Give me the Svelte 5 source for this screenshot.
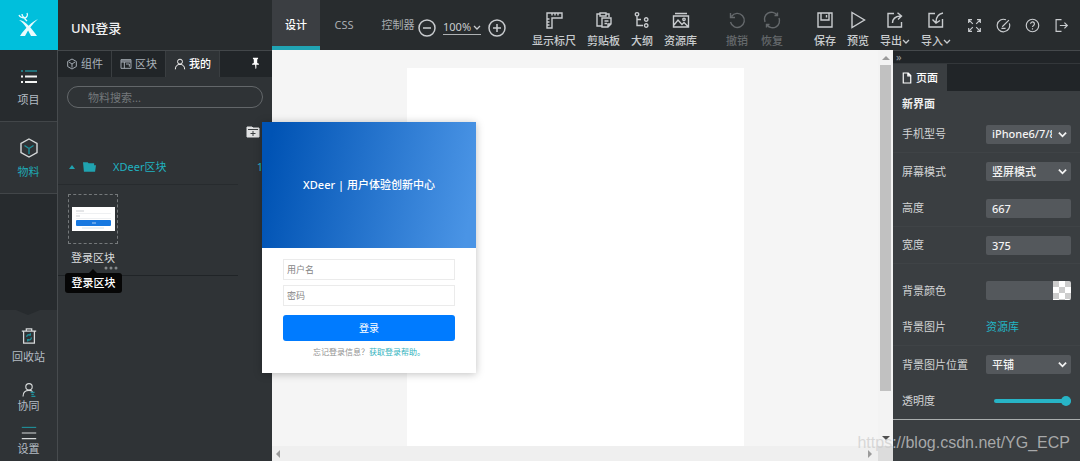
<script>
  let device = $state('iPhone6/7/8');
  let orientation = $state('竖屏模式');
  let height = $state('667');
  let width = $state('375');
  let color = $state('');
  let repeat = $state('平铺');
  let opacity = $state(100);
  let keyword = $state('');
  let username = $state('');
  let password = $state('');

  const modes = ['设计', 'CSS', '控制器'];
  let mode = $state('设计');

  const viewTools = [
    { id: 'ruler', label: '显示标尺' },
    { id: 'clipboard', label: '剪贴板' },
    { id: 'outline', label: '大纲' },
    { id: 'library', label: '资源库' }
  ];
  const historyTools = [
    { id: 'undo', label: '撤销' },
    { id: 'redo', label: '恢复' }
  ];
  const fileTools = [
    { id: 'save', label: '保存' },
    { id: 'play', label: '预览' },
    { id: 'export', label: '导出', menu: true },
    { id: 'import', label: '导入', menu: true }
  ];
  const windowTools = [
    { id: 'fullscreen', label: '全屏' },
    { id: 'compass', label: '导航' },
    { id: 'help', label: '帮助' },
    { id: 'exit', label: '退出' }
  ];
  const panelTabs = [
    { id: 'cube', label: '组件' },
    { id: 'block', label: '区块' },
    { id: 'user', label: '我的' }
  ];
  let panelTab = $state('我的');

  // 18x18 line icons
  const icons = {
    ruler: 'M2 2h15v5H7v10H2zM7 2v2.500M10 2v2.500M13 2v2.500M2 8h2.500M2 11h2.500M2 14h2.500',
    clipboard: 'M5 3H2v12h5M11 3h3v3M5 2h6v3H5zM7 7h9v6l-3 3H7zM9.500 10h4M9.500 12.500h2.500M16 13h-3v3',
    outline: 'M4 5v9.500h6M2.300 3.300a1.700 1.700 0 1 0 3.400 0a1.700 1.700 0 1 0-3.400 0M11.500 8.500a1.700 1.700 0 1 0 3.400 0a1.700 1.700 0 1 0-3.400 0M11.500 14.500a1.700 1.700 0 1 0 3.400 0a1.700 1.700 0 1 0-3.400 0M4 8.500h4',
    library: 'M3 2.500h12M1.500 5h15v11h-15zM2 14l4-5l4 4.500l2-2l4 4M10.800 8.300a1.200 1.200 0 1 0 2.400 0a1.200 1.200 0 1 0-2.400 0',
    undo: 'M3.500 5.500A7 7 0 1 1 2.500 11M2.500 2v4.500H7',
    redo: 'M2 11A7 7 0 0 1 14 4M16 7A7 7 0 0 1 4 14M14.500 1.500v3H11.500M3.500 16.500v-3H6.500',
    save: 'M2 2h14v14H2zM5 2v7h8V2M10.500 4v2.500',
    play: 'M3 1.500L15.500 9L3 16.500z',
    export: 'M8 2.500H2v13.500h13.500v-5M6.500 12c0-4 2-6.500 8-7M11.500 1.800L15.500 5l-3.500 3.500',
    import: 'M8 2.500H2v13.500h13.500V8M16 2c-5 1-7 4-7 9M5.500 8.500L9 12l4-2.500',
    fullscreen: 'M2 6V2h4M12 2h4v4M16 12v4h-4M6 16H2v-4M2.500 2.500L7 7M15.500 2.500L11 7M15.500 15.500L11 11M2.500 15.500L7 11',
    compass: 'M12 2.200A7.500 7.500 0 1 0 16 6.500M15.500 2.500L7.500 10.500M6.500 12.500h5',
    help: 'M1.500 9a7.500 7.500 0 1 0 15 0a7.500 7.500 0 1 0-15 0M6.700 7a2.300 2.300 0 1 1 3.600 1.900Q9 9.700 9 10.800M9 12.300v1.500',
    exit: 'M9 2H2.500v14H9M7 9h9M12.500 5.500L16 9l-3.500 3.500',
    cube: 'M9 1.500l6.500 3.700v7.600L9 16.500l-6.500-3.700V5.200zM4.500 6L9 9l4.500-3M9 9v5.500',
    block: 'M1.500 2.500h15v13h-15zM1.500 6h15M6.500 6v9.500M2 4.300h14M9 9h5v4',
    user: 'M5.300 5.500a3.700 3.700 0 1 0 7.400 0a3.700 3.700 0 1 0-7.400 0M2 17c0-5 3-7.500 7-7.500s7 2.500 7 7.500'
  };
</script>

{#snippet icon(id)}
  <svg class="icon" viewBox="0 0 18 18" aria-hidden="true"><path d={icons[id]} /></svg>
{/snippet}

{#snippet toolGroup(items, name)}
  <div class="tools {name}">
    {#each items as item}
      <button class="tool" disabled={name === 'history'}>
        {@render icon(item.id)}
        <span class="tool-label">
          {item.label}{#if item.menu}<svg class="caret" viewBox="0 0 8 8"><path d="M1 3l3 3l3-3" /></svg>{/if}
        </span>
      </button>
    {/each}
  </div>
{/snippet}

<div class="editor">
  <header class="topbar">
    <a class="logo" href="#home" aria-label="XDeer">
      <svg viewBox="0 0 24 26">
        <path d="M2 8C8 8 15 17 20 24L14 24C11 18 8 12 2 8z" />
        <path d="M21 7C15 10 8 16 3 24L8 24C11 18 15 12 21 7z" />
        <path class="antler" d="M2 3c1 3 4 3 7 3M5 2c0 2 1 3 3 4M10 1c1 2 0 4-2 5M7 6l3 3" />
      </svg>
    </a>
    <h1>UNI登录</h1>
    <nav class="modes">
      {#each modes as m}
        <button class="mode" class:active={mode === m} onclick={() => (mode = m)}>{m}</button>
      {/each}
    </nav>
    <div class="zoom">
      <button class="round" aria-label="缩小"><svg viewBox="0 0 18 18"><circle cx="9" cy="9" r="8" /><path d="M5 9h8" /></svg></button>
      <button class="percent">100%<svg class="caret" viewBox="0 0 8 8"><path d="M1 3l3 3l3-3" /></svg></button>
      <button class="round" aria-label="放大"><svg viewBox="0 0 18 18"><circle cx="9" cy="9" r="8" /><path d="M5 9h8M9 5v8" /></svg></button>
    </div>
    {@render toolGroup(viewTools, 'view')}
    {@render toolGroup(historyTools, 'history')}
    {@render toolGroup(fileTools, 'file')}
    <div class="window-tools">
      {#each windowTools as item}
        <button aria-label={item.label}>{@render icon(item.id)}</button>
      {/each}
    </div>
  </header>

  <div class="body">
    <nav class="rail">
      <a class="rail-item" href="#project">
        <svg viewBox="0 0 20 20">
          <path class="teal" d="M6 5h12" /><path class="thick" d="M6 10.500h12M6 16h12M2 10.500h2M2 16h2" /><path class="teal" d="M2 5h2" />
        </svg>
        <span>项目</span>
      </a>
      <a class="rail-item current" href="#material">
        <svg viewBox="0 0 20 20">
          <path d="M10 1l8 4.500v9L10 19l-8-4.500v-9z" /><path class="teal" d="M5.500 7.500L10 10.500l4.500-3M10 10.500V16" />
        </svg>
        <span>物料</span>
      </a>
      <div class="rail-bottom">
        <a class="rail-small bin" href="#trash">
          <svg viewBox="0 0 20 20">
            <path d="M2 4.500h16M7 4V2h6v2M4 5v13h12V5" /><path class="teal" d="M7.500 11a2.500 2.500 0 0 1 4-2M12.500 11.500a2.500 2.500 0 0 1-4 2.500M11.500 7v2h-2M8.500 16v-2h2" />
          </svg>
          <span>回收站</span>
        </a>
        <a class="rail-small" href="#team">
          <svg viewBox="0 0 20 20">
            <circle cx="10" cy="6" r="4" /><path d="M2.500 18c0-5 3-7.500 7.500-7.500c2 0 3.500.500 4.500 1.500" /><path class="teal" d="M12 13h5M13 15.500h3M13 18h5" />
          </svg>
          <span>协同</span>
        </a>
        <a class="rail-small" href="#settings">
          <svg viewBox="0 0 20 20"><path class="teal" d="M1 3h18" /><path d="M1 10h18M1 17h18" /></svg>
          <span>设置</span>
        </a>
      </div>
    </nav>

    <aside class="materials">
      <div class="panel-tabs">
        {#each panelTabs as tab}
          <button class="panel-tab" class:active={panelTab === tab.label} onclick={() => (panelTab = tab.label)}>
            {@render icon(tab.id)}{tab.label}
          </button>
        {/each}
        <button class="pin" aria-label="固定">
          <svg viewBox="0 0 10 14"><path d="M2 1h6v1L7 3v4l2 1v1H6v4L5 14L4.500 9H1V8l2-1V3L2 2z" /></svg>
        </button>
      </div>
      <input class="search" type="text" placeholder="物料搜索..." aria-label="物料搜索" bind:value={keyword} />
      <div class="actions">
        <button aria-label="新建分组">
          <svg viewBox="0 0 14 12"><path class="fill" d="M1 1h5l1 1h6v9H1z" /><path class="plus" d="M7 5v5M4.500 7.500h5M2 3.500h10" /></svg>
        </button>
      </div>
      <button class="group">
        <svg class="up" viewBox="0 0 8 8"><path d="M1 6l3-4l3 4z" /></svg>
        <svg class="folder" viewBox="0 0 14 12"><path d="M0 1h5l1 1h6v2h2l-1 7H1z" /></svg>
        <span>XDeer区块</span>
        <span class="count">1</span>
      </button>
      <div class="blocks">
        <figure class="block">
          <div class="thumb">
            <svg viewBox="0 0 43 24">
              <rect width="43" height="24" fill="#fff" />
              <path d="M4 4h8M4 9h4" stroke="#c9ccd0" />
              <path d="M4 6.500h35M4 11.500h35" stroke="#eef0f2" />
              <rect x="4" y="13" width="35" height="6" rx="1" fill="#1778e0" />
              <path d="M20 16h4" stroke="#a9cdf5" />
              <path d="M10 21h22" stroke="#d3e4ee" />
            </svg>
          </div>
          <figcaption>登录区块</figcaption>
          <svg class="more" viewBox="0 0 14 4"><circle cx="2" cy="2" r="1.500" /><circle cx="7" cy="2" r="1.500" /><circle cx="12" cy="2" r="1.500" /></svg>
          <div class="tooltip" role="tooltip">登录区块</div>
        </figure>
      </div>

      <section class="preview">
        <div class="banner">XDeer | 用户体验创新中心</div>
        <form class="login">
          <input type="text" placeholder="用户名" aria-label="用户名" bind:value={username} />
          <input type="password" placeholder="密码" aria-label="密码" bind:value={password} />
          <button type="button">登录</button>
          <p>忘记登录信息？<a href="#help">获取登录帮助。</a></p>
        </form>
      </section>
    </aside>

    <main class="stage">
      <div class="stage-row">
        <div class="canvas"><div class="page"></div></div>
        <div class="vbar">
          <svg viewBox="0 0 8 8"><path d="M0 6l4-4l4 4z" /></svg>
          <div class="handle"></div>
          <svg class="dark" viewBox="0 0 8 8"><path d="M0 2l4 4l4-4z" /></svg>
        </div>
      </div>
      <div class="hbar">
        <svg viewBox="0 0 8 8"><path d="M6 0L2 4l4 4z" /></svg>
        <svg viewBox="0 0 8 8"><path d="M2 0l4 4l-4 4z" /></svg>
        <span class="corner"></span>
      </div>
    </main>

    <aside class="props">
      <button class="collapse" aria-label="收起">»</button>
      <div class="props-tabs">
        <button class="props-tab">
          <svg viewBox="0 0 12 14"><path d="M1.500 1h6l3 3v9h-9zM7 1v3.500h3.500" /></svg>页面
        </button>
      </div>
      <h2>新界面</h2>
      <div class="row line">
        <label for="device">手机型号</label>
        <div class="select">
          <select id="device" bind:value={device}><option>iPhone6/7/8</option><option>iPhone X</option></select>
          <svg viewBox="0 0 10 10"><path d="M1 3l4 4l4-4" /></svg>
        </div>
      </div>
      <div class="row">
        <label for="orientation">屏幕模式</label>
        <div class="select">
          <select id="orientation" bind:value={orientation}><option>竖屏模式</option><option>横屏模式</option></select>
          <svg viewBox="0 0 10 10"><path d="M1 3l4 4l4-4" /></svg>
        </div>
      </div>
      <div class="row line">
        <label for="height">高度</label>
        <input class="field" id="height" type="text" bind:value={height} />
      </div>
      <div class="row line">
        <label for="width">宽度</label>
        <input class="field" id="width" type="text" bind:value={width} />
      </div>
      <div class="row color">
        <label for="color">背景颜色</label>
        <div class="swatch-field">
          <input id="color" type="text" bind:value={color} />
          <button class="swatch" aria-label="选择颜色"></button>
        </div>
      </div>
      <div class="row line">
        <span>背景图片</span>
        <a class="pick" href="#library">资源库</a>
      </div>
      <div class="row">
        <label for="repeat">背景图片位置</label>
        <div class="select">
          <select id="repeat" bind:value={repeat}><option>平铺</option><option>居中</option></select>
          <svg viewBox="0 0 10 10"><path d="M1 3l4 4l4-4" /></svg>
        </div>
      </div>
      <div class="row last">
        <label for="opacity">透明度</label>
        <input class="slider" id="opacity" type="range" min="0" max="100" bind:value={opacity} />
      </div>
    </aside>
  </div>
  <div class="watermark">https://blog.csdn.net/YG_ECP</div>
</div>

<style>
  :global(body) {
    margin: 0;
    background: #2f3336;
  }

  .editor {
    position: relative;
    display: flex;
    flex-direction: column;
    min-height: 100vh;
    overflow: hidden;
    font-family: "Noto Sans", "Noto Sans CJK SC", sans-serif;
    font-size: 11px;
    line-height: 16px;
    color: #c9cccf;
  }

  .editor * {
    box-sizing: border-box;
  }

  button,
  input,
  select {
    margin: 0;
    padding: 0;
    border: 0;
    background: none;
    color: inherit;
    font: inherit;
  }

  a {
    color: inherit;
    text-decoration: none;
  }

  svg {
    display: block;
    flex: none;
    fill: none;
    stroke: currentColor;
  }

  .icon {
    width: 18px;
    height: 18px;
    stroke-width: 1.4;
  }

  .caret {
    width: 8px;
    height: 8px;
    stroke-width: 1.3;
  }

  /* top bar */
  .topbar {
    display: flex;
    align-items: stretch;
    height: 50px;
    background: #282c2e;
  }

  .logo {
    display: flex;
    flex: none;
    align-items: center;
    justify-content: center;
    width: 58px;
    background: #00bfdc;
  }

  .logo svg {
    width: 24px;
    height: 26px;
    fill: #e9fbfd;
    stroke: none;
  }

  .logo .antler {
    fill: none;
    stroke: #e9fbfd;
    stroke-width: 1.3;
  }

  h1 {
    flex: none;
    width: 214px;
    margin: 0;
    padding: 18px 13px 0;
    font-size: 13px;
    font-weight: 500;
    line-height: 20px;
    color: #f0f1f2;
  }

  .modes {
    display: flex;
  }

  .mode {
    width: 48px;
    padding-top: 4px;
    border-bottom: 4px solid transparent;
    color: #aaaeb1;
    white-space: nowrap;
  }

  .mode:last-child {
    width: 60px;
  }

  .mode.active {
    border-color: #21a4b4;
    background: #3b3e42;
    color: #fff;
    font-weight: 500;
  }

  .zoom {
    display: flex;
    align-items: center;
    gap: 7px;
    padding-top: 5px;
    margin-left: -10px;
  }

  .round svg {
    width: 18px;
    height: 18px;
    stroke-width: 1.5;
  }

  .percent {
    display: flex;
    align-items: center;
    gap: 2px;
    border-bottom: 1px solid #aeb1b3;
    line-height: 14px;
  }

  .tools {
    display: flex;
    gap: 11px;
    padding-top: 11px;
    font-weight: 500;
  }

  .view {
    margin-left: 26px;
  }

  .history {
    gap: 13px;
    margin-left: 29px;
    color: #65696c;
  }

  .file {
    margin-left: 31px;
  }

  .tool {
    display: flex;
    flex-direction: column;
    align-items: center;
    gap: 4px;
    height: 38px;
  }

  .tool-label {
    display: flex;
    align-items: center;
    white-space: nowrap;
  }

  .window-tools {
    display: flex;
    gap: 14px;
    align-items: center;
    margin-left: auto;
    padding-right: 11px;
  }

  .window-tools .icon {
    width: 15px;
    height: 15px;
  }

  .body {
    display: flex;
    flex: 1;
  }

  /* left rail */
  .rail {
    display: flex;
    flex: none;
    flex-direction: column;
    width: 58px;
    border-right: 1px solid #474b4e;
    background: #272b2e;
    color: #b4bcc4;
  }

  .rail svg {
    width: 20px;
    height: 20px;
    stroke: #d6d9da;
    stroke-width: 1.4;
  }

  .rail .teal {
    stroke: #20909b;
  }

  .rail .thick {
    stroke: #f2f3f3;
    stroke-width: 2;
  }

  .rail-item {
    display: flex;
    flex-direction: column;
    align-items: center;
    gap: 6px;
    height: 71px;
    padding-top: 16px;
  }

  .rail-item.current {
    height: 73px;
    border-top: 1px solid #424649;
    border-bottom: 1px solid #424649;
    background: #2f3336;
    color: #1fa9b7;
  }

  .rail-bottom {
    position: relative;
    display: flex;
    flex-direction: column;
    gap: 11px;
    margin-top: auto;
    padding: 17px 0 4px;
    background: #2f3336;
  }

  .rail-bottom::before {
    position: absolute;
    top: 0;
    left: 16px;
    border: 12px solid transparent;
    border-top: 5px solid #272b2e;
    border-bottom: 0;
    content: "";
  }

  .rail-small {
    display: flex;
    flex-direction: column;
    align-items: center;
  }

  .rail-small svg {
    width: 16px;
    height: 16px;
  }

  .bin {
    gap: 4px;
    padding-bottom: 6px;
  }

  .bin svg {
    width: 18px;
    height: 18px;
  }

  /* material panel */
  .materials {
    position: relative;
    z-index: 1;
    flex: none;
    width: 214px;
    background: #2f3336;
  }

  .panel-tabs {
    display: flex;
    height: 27px;
    border-top: 1px solid #43474a;
    background: #212528;
  }

  .panel-tab {
    display: flex;
    align-items: center;
    justify-content: center;
    gap: 3px;
    width: 54px;
    border-right: 1px solid #3a3e41;
    color: #aab2ba;
  }

  .panel-tab .icon {
    width: 12px;
    height: 12px;
  }

  .panel-tab.active {
    background: #2f3336;
    color: #fff;
    font-weight: 500;
  }

  .pin {
    margin-left: auto;
    padding: 0 12px 3px;
  }

  .pin svg {
    width: 9px;
    height: 12px;
    fill: #fff;
    stroke: none;
  }

  .search {
    display: block;
    width: 196px;
    height: 22px;
    margin: 9px 9px 0;
    padding: 0 20px;
    border: 1px solid #63676a;
    border-radius: 11px;
  }

  .search::placeholder {
    color: #74787b;
  }

  .actions {
    display: flex;
    justify-content: flex-end;
    padding: 18px 12px 0;
  }

  .actions svg {
    width: 14px;
    height: 12px;
  }

  .actions .fill {
    fill: #e1e2e3;
    stroke: #e1e2e3;
  }

  .actions .plus {
    stroke: #3a3e41;
    stroke-width: 1;
  }

  .group {
    display: flex;
    align-items: center;
    width: 100%;
    height: 46px;
    padding: 11px 9px 0 10px;
    color: #20b2c0;
  }

  .group svg {
    fill: #20a3b0;
    stroke: none;
  }

  .up {
    width: 8px;
    height: 8px;
  }

  .folder {
    width: 13px;
    height: 12px;
    margin: 0 17px 0 7px;
  }

  .count {
    margin-left: auto;
  }

  .blocks {
    margin-right: 34px;
    padding: 9px 10px 5px;
    border-top: 1px solid #272b2e;
    border-bottom: 1px solid #202427;
  }

  .block {
    position: relative;
    width: 50px;
    margin: 0;
    color: #d9dbdc;
    text-align: center;
    white-space: nowrap;
  }

  .thumb {
    display: flex;
    align-items: center;
    justify-content: center;
    height: 50px;
    border: 1px dashed #75797b;
  }

  .thumb svg {
    width: 43px;
    height: 24px;
    stroke: none;
  }

  figcaption {
    padding-top: 6px;
  }

  .more {
    width: 14px;
    height: 4px;
    margin-left: auto;
    fill: #85898b;
    stroke: none;
  }

  .tooltip {
    position: absolute;
    top: 79px;
    left: -3px;
    width: 57px;
    border-radius: 3px;
    background: #060606;
    color: #fff;
    font-weight: 500;
    line-height: 20px;
  }

  .tooltip::before {
    position: absolute;
    top: -4px;
    left: 24px;
    border: 4px solid transparent;
    border-top: 0;
    border-bottom-color: #060606;
    content: "";
  }

  /* floating block preview */
  .preview {
    position: absolute;
    top: 72px;
    left: 204px;
    width: 214px;
    background: #fff;
    box-shadow: 0 1px 8px rgba(0, 0, 0, 0.25);
  }

  .banner {
    background: linear-gradient(100deg, #0053b4 5%, #4a94e5 95%);
    color: #fff;
    font-weight: 500;
    line-height: 126px;
    text-align: center;
  }

  .login {
    display: flex;
    flex-direction: column;
    gap: 5px;
    padding: 11px 21px 15px;
  }

  .login input {
    height: 21px;
    padding: 0 3px;
    border: 1px solid #ebebeb;
    color: #555;
    font-size: 9px;
  }

  .login input::placeholder {
    color: #858585;
  }

  .login button {
    height: 26px;
    margin-top: 4px;
    border-radius: 3px;
    background: #007bff;
    color: #fff;
    font-size: 10px;
  }

  .login p {
    margin: 0;
    color: #909090;
    font-size: 8px;
    line-height: 12px;
    text-align: center;
    white-space: nowrap;
  }

  .login a {
    color: #35b4c0;
  }

  /* canvas */
  .stage {
    display: flex;
    flex: 1;
    flex-direction: column;
    min-width: 0;
    background: #f5f5f5;
  }

  .stage-row {
    display: flex;
    flex: 1;
  }

  .canvas {
    display: flex;
    flex: 1;
    justify-content: center;
    padding-top: 18px;
  }

  .page {
    width: 337px;
    background: #fff;
  }

  .vbar {
    display: flex;
    flex-direction: column;
    align-items: center;
    width: 15px;
    padding: 4px 0;
    background: #f3f3f3;
  }

  .vbar svg,
  .hbar svg {
    width: 8px;
    height: 8px;
    fill: #9b9b9b;
    stroke: none;
  }

  .vbar .dark {
    margin-top: auto;
    fill: #505050;
  }

  .handle {
    width: 11px;
    height: 84%;
    margin-top: 3px;
    background: #c1c1c1;
  }

  .hbar {
    display: flex;
    align-items: center;
    justify-content: space-between;
    height: 15px;
    padding-left: 2px;
    background: #efefef;
  }

  .hbar svg:nth-child(2) {
    margin-left: auto;
    margin-right: 4px;
  }

  .corner {
    width: 15px;
    height: 15px;
    background: #dcdcdc;
  }

  /* properties */
  .props {
    flex: none;
    width: 187px;
    background: #3a3e41;
    color: #d2d4d5;
  }

  .collapse {
    display: block;
    width: 100%;
    height: 14px;
    padding-left: 3px;
    border-top: 1px solid #45494c;
    border-bottom: 1px solid #33373a;
    background: #212528;
    color: #9b9ea0;
    line-height: 12px;
    text-align: left;
  }

  .props-tabs {
    display: flex;
    height: 27px;
    background: #212528;
  }

  .props-tab {
    display: flex;
    align-items: center;
    justify-content: center;
    gap: 4px;
    width: 54px;
    background: #3a3e41;
    color: #fff;
    font-weight: 500;
  }

  .props-tab svg {
    width: 10px;
    height: 12px;
    stroke-width: 1.4;
  }

  h2 {
    margin: 0;
    padding-left: 9px;
    color: #eee;
    font-size: 11px;
    font-weight: 600;
    line-height: 25px;
  }

  .row {
    display: flex;
    align-items: center;
    justify-content: space-between;
    height: 37px;
    padding: 0 9px;
  }

  .row.line {
    border-bottom: 1px solid #3f4346;
  }

  .row.color {
    height: 45px;
    padding-top: 8px;
  }

  .row.last {
    border-bottom: 1px solid #a9adad;
  }

  .field,
  .select,
  .swatch-field {
    width: 85px;
    height: 19px;
    border-radius: 2px;
    background: #54585c;
    color: #f3f3f3;
    font-weight: 500;
  }

  .field {
    padding: 0 6px;
  }

  .select {
    display: flex;
    align-items: center;
    padding-right: 4px;
  }

  .select select {
    flex: 1;
    min-width: 0;
    height: 19px;
    padding-left: 6px;
    appearance: none;
  }

  .select svg {
    width: 9px;
    height: 9px;
    margin-left: 6px;
    stroke-width: 2;
  }

  option {
    background: #54585c;
  }

  .swatch-field {
    display: flex;
    overflow: hidden;
  }

  .swatch-field input {
    flex: 1;
    min-width: 0;
    padding-left: 6px;
  }

  .swatch {
    width: 18px;
    background: repeating-conic-gradient(#fff 0 25%, #ccc 0 50%) 0 0 / 12px 12px;
  }

  .pick {
    width: 85px;
    color: #23b4c4;
  }

  .slider {
    width: 77px;
    height: 10px;
    appearance: none;
  }

  .slider::-webkit-slider-runnable-track {
    height: 4px;
    border-radius: 2px;
    background: #27b4c6;
  }

  .slider::-webkit-slider-thumb {
    width: 10px;
    height: 10px;
    margin-top: -3px;
    border-radius: 50%;
    background: #27b4c6;
    appearance: none;
  }

  .watermark {
    position: absolute;
    right: 10px;
    bottom: 8px;
    z-index: 2;
    color: rgba(205, 205, 205, 0.75);
    font-family: "Liberation Sans", Arial, sans-serif;
    font-size: 16px;
    line-height: 20px;
    pointer-events: none;
  }
</style>
